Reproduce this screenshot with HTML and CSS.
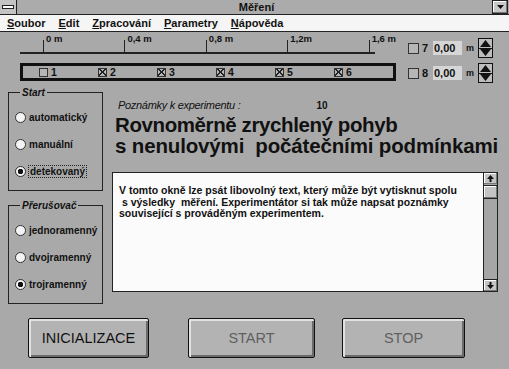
FILE: index.html
```html
<!DOCTYPE html>
<html lang="cs">
<head>
  <meta charset="UTF-8" />
  <title>Měření</title>
  <link rel="stylesheet" href="styles.css">
</head>
<body>
  <div class="window">

    <!-- title bar -->
    <div class="titlebar">
      <div class="sysmenu"><span></span></div>
      <div class="title">Měření</div>
      <div class="minbtn">
        <svg width="7" height="4" viewBox="0 0 7 4"><polygon points="0,0 7,0 3.5,4" fill="#111"/></svg>
      </div>
    </div>

    <!-- menu -->
    <div class="menubar">
      <span><u>S</u>oubor</span>
      <span><u>E</u>dit</span>
      <span><u>Z</u>pracování</span>
      <span><u>P</u>arametry</span>
      <span><u>N</u>ápověda</span>
    </div>

    <!-- scale + sensors -->
    <div class="top">
      <div class="scale">
        <div class="ruler">
          <div class="tick"><i></i><span>0 m</span></div>
          <div class="tick"><i></i><span>0,4 m</span></div>
          <div class="tick"><i></i><span>0,8 m</span></div>
          <div class="tick"><i></i><span>1,2m</span></div>
          <div class="tick last"><i></i><span>1,6 m</span></div>
        </div>
        <div class="ruler-line"></div>
        <div class="track">
          <div class="slot"><span class="check"></span>1</div>
          <div class="slot"><span class="check on"></span>2</div>
          <div class="slot"><span class="check on"></span>3</div>
          <div class="slot"><span class="check on"></span>4</div>
          <div class="slot"><span class="check on"></span>5</div>
          <div class="slot"><span class="check on"></span>6</div>
        </div>
      </div>

      <div class="fields">
        <div class="field-row">
          <span class="check big"></span>
          <span class="digit">7</span>
          <span class="value">0,00</span>
          <span class="unit">m</span>
          <div class="spin">
            <div class="spin-half"><svg width="11" height="7" viewBox="0 0 11 7"><polygon points="0,7 11,7 5.5,0" fill="#111"/></svg></div>
            <div class="spin-half"><svg width="11" height="7" viewBox="0 0 11 7"><polygon points="0,0 11,0 5.5,7" fill="#111"/></svg></div>
          </div>
        </div>
        <div class="field-row">
          <span class="check big"></span>
          <span class="digit">8</span>
          <span class="value">0,00</span>
          <span class="unit">m</span>
          <div class="spin">
            <div class="spin-half"><svg width="11" height="7" viewBox="0 0 11 7"><polygon points="0,7 11,7 5.5,0" fill="#111"/></svg></div>
            <div class="spin-half"><svg width="11" height="7" viewBox="0 0 11 7"><polygon points="0,0 11,0 5.5,7" fill="#111"/></svg></div>
          </div>
        </div>
      </div>
    </div>

    <div class="main">
      <div class="side">
        <fieldset class="group start">
          <legend>Start</legend>
          <div class="radio"><span class="dot"></span>automatický</div>
          <div class="radio"><span class="dot"></span>manuální</div>
          <div class="radio"><span class="dot on"></span><span class="focus">detekovaný</span></div>
        </fieldset>
        <fieldset class="group">
          <legend>Přerušovač</legend>
          <div class="radio"><span class="dot"></span>jednoramenný</div>
          <div class="radio"><span class="dot"></span>dvojramenný</div>
          <div class="radio"><span class="dot on"></span>trojramenný</div>
        </fieldset>
      </div>

      <div class="notes">
        <div class="notes-head"><em>Poznámky k experimentu :</em><span class="num">10</span></div>
        <h1><span class="line">Rovnoměrně zrychlený pohyb</span><span class="line second">s nenulovými&nbsp; počátečními podmínkami</span></h1>
        <div class="memo">
          <div class="memo-text">V tomto okně lze psát libovolný text, který může být vytisknut spolu<br>&nbsp;s výsledky&nbsp; měření. Experimentátor si tak může napsat poznámky<br>související s prováděným experimentem.</div>
          <div class="vscroll">
            <div class="sbtn"><svg width="7" height="7" viewBox="0 0 7 7"><polygon points="0,4 7,4 3.5,0" fill="#111"/><rect x="2.5" y="4" width="2" height="3" fill="#111"/></svg></div>
            <div class="thumb"></div>
            <div class="sfill"></div>
            <div class="sbtn"><svg width="7" height="7" viewBox="0 0 7 7"><polygon points="0,3 7,3 3.5,7" fill="#111"/><rect x="2.5" y="0" width="2" height="3" fill="#111"/></svg></div>
          </div>
        </div>
      </div>
    </div>

    <div class="actions">
      <button class="btn init">INICIALIZACE</button>
      <button class="btn off start-btn">START</button>
      <button class="btn off stop-btn">STOP</button>
    </div>

  </div>
</body>
</html>
```

FILE: styles.css
```css
body {
  margin: 0;
  background: #a9a9a9;
}

.window {
  width: 509px;
  height: 369px;
  background: #a9a9a9;
  font-family: 'Liberation Sans', Arial, sans-serif;
  color: #111;
  overflow: hidden;
}

/* title bar */
.titlebar {
  height: 14px;
  display: flex;
  align-items: center;
  border-bottom: 1px solid #222;
  background: #ababab;
}

.sysmenu {
  width: 16px;
  height: 14px;
  border-right: 1px solid #222;
  display: flex;
  align-items: center;
  justify-content: center;
  background: #c4c4c4;
}

.sysmenu span {
  width: 10px;
  height: 2px;
  border: 1px solid #222;
  background: #fff;
}

.title {
  flex: 1;
  text-align: center;
  font-weight: bold;
  font-size: 11px;
  padding-left: 4px;
}

.minbtn {
  width: 14px;
  height: 12px;
  margin-right: 1px;
  border: 1px solid #222;
  background: #c8c8c8;
  box-shadow: inset -1px -1px 0 #777, inset 1px 1px 0 #fff;
  display: flex;
  align-items: center;
  justify-content: center;
}

/* menu */
.menubar {
  height: 16px;
  display: flex;
  align-items: center;
  gap: 13px;
  padding-left: 7px;
  background: #f5f5f5;
  border-bottom: 1px solid #222;
  font-size: 11px;
  font-weight: bold;
}

/* scale area */
.top {
  display: flex;
  height: 52px;
}

.scale {
  margin-left: 20px;
  width: 376px;
}

.ruler {
  display: flex;
  height: 19px;
  padding-top: 1px;
  padding-left: 23px;
}

.tick {
  width: 82.5px;
  display: flex;
  align-items: flex-end;
  white-space: nowrap;
}

.tick.last {
  width: auto;
}

.tick i {
  width: 1px;
  height: 12px;
  background: #222;
}

.tick span {
  align-self: flex-start;
  font-size: 9.5px;
  font-weight: bold;
  margin-left: 2px;
}

.ruler-line {
  width: 355px;
  height: 2px;
  background: #222;
}

.track {
  margin-top: 9px;
  height: 18px;
  box-sizing: border-box;
  border: 3px solid #111;
  display: flex;
  align-items: center;
  padding-left: 16px;
}

.slot {
  width: 66.6px;
  display: flex;
  align-items: center;
  gap: 3px;
  font-size: 10.5px;
  font-weight: bold;
}

.check {
  width: 7px;
  height: 7px;
  border: 1px solid #333;
  background: #b6b6b6;
}

.check.on {
  background:
    linear-gradient(45deg, transparent 45%, #222 45%, #222 58%, transparent 58%),
    linear-gradient(-45deg, transparent 45%, #222 45%, #222 58%, transparent 58%),
    #b6b6b6;
}

.check.big {
  width: 9px;
  height: 9px;
}

/* distance fields on the right */
.fields {
  margin-left: 12px;
  padding-top: 6px;
  display: flex;
  flex-direction: column;
  gap: 5px;
}

.field-row {
  height: 20px;
  display: flex;
  align-items: center;
}

.digit {
  font-size: 11px;
  font-weight: bold;
  margin-left: 3px;
  width: 8px;
}

.value {
  margin-left: 3px;
  width: 28px;
  padding-left: 1px;
  background: #d6d6d6;
  font-size: 11px;
  font-weight: bold;
  line-height: 14px;
}

.unit {
  margin-left: 4px;
  font-size: 9px;
  font-weight: bold;
}

.spin {
  margin-left: 4px;
  width: 13px;
  height: 18px;
  border: 1px solid #111;
  background: #bdbdbd;
  display: flex;
  flex-direction: column;
}

.spin-half {
  flex: 1;
  display: flex;
  align-items: center;
  justify-content: center;
}

.spin-half + .spin-half {
  border-top: 1px solid #111;
}

/* main part */
.main {
  display: flex;
  height: 226px;
}

.side {
  width: 95px;
  margin-left: 8px;
  padding-top: 3px;
  display: flex;
  flex-direction: column;
  gap: 9px;
}

.group {
  margin: 0;
  padding: 13px 0 0 6px;
  border: 1px solid #222;
  display: flex;
  flex-direction: column;
  gap: 15px;
  height: 89px;
}

.group legend {
  margin-left: 5px;
  padding: 0 2px;
  font-size: 10px;
  font-style: italic;
  font-weight: bold;
}

.radio {
  display: flex;
  align-items: center;
  gap: 3px;
  font-size: 10px;
  font-weight: bold;
  height: 12px;
}

.dot {
  width: 9px;
  height: 9px;
  border: 1px solid #333;
  border-radius: 50%;
  background: #f4f4f4;
  box-sizing: content-box;
}

.dot.on {
  background: radial-gradient(circle, #111 0 2.5px, #f4f4f4 3px);
}

.focus {
  outline: 1px dotted #222;
  outline-offset: 0;
  padding: 0 1px;
}

.notes {
  margin-left: 9px;
  width: 386px;
}

.notes-head {
  padding-left: 6px;
  padding-top: 13px;
  height: 14px;
  line-height: 14px;
}

.notes-head em {
  font-size: 11px;
  letter-spacing: -0.3px;
}

.num {
  margin-left: 76px;
  font-size: 10px;
  font-weight: bold;
}

h1 {
  margin: 3px 0 0 3px;
  font-size: 20.5px;
  line-height: 21px;
  font-weight: bold;
  white-space: nowrap;
}

h1 .line {
  display: block;
  letter-spacing: -0.4px;
}

h1 .second {
  letter-spacing: -0.15px;
}

.memo {
  margin-top: 16px;
  height: 120px;
  box-sizing: border-box;
  border: 1px solid #222;
  background: #fbfbfb;
  display: flex;
}

.memo-text {
  flex: 1;
  padding: 12px 6px 0;
  font-size: 10.5px;
  font-weight: bold;
  line-height: 11.5px;
  white-space: nowrap;
}

.vscroll {
  width: 13px;
  border-left: 1px solid #222;
  background: #a6a6a6;
  display: flex;
  flex-direction: column;
}

.sbtn, .thumb {
  height: 11px;
  background: #c4c4c4;
  box-shadow: inset -1px -1px 0 #777, inset 1px 1px 0 #fff;
  display: flex;
  align-items: center;
  justify-content: center;
}

.thumb {
  margin-top: 1px;
  height: 12px;
  border-top: 1px solid #222;
  border-bottom: 1px solid #222;
}

.sfill {
  flex: 1;
}

.sbtn + .thumb, .sfill + .sbtn {
  border-top: 1px solid #222;
}

/* buttons */
.actions {
  display: flex;
  padding: 8px 0 0 28px;
}

.btn {
  height: 40px;
  border: 1px solid #111;
  border-radius: 2px;
  background: #b3b3b3;
  box-shadow: inset 2px 2px 0 #e2e2e2, inset -2px -2px 0 #6b6b6b;
  font-family: inherit;
  font-size: 14.5px;
  color: #111;
  padding: 0;
}

.init {
  width: 121px;
}

.start-btn {
  width: 127px;
  margin-left: 39px;
}

.stop-btn {
  width: 123px;
  margin-left: 27px;
}

.btn.off {
  color: #5f5f5f;
}
```
